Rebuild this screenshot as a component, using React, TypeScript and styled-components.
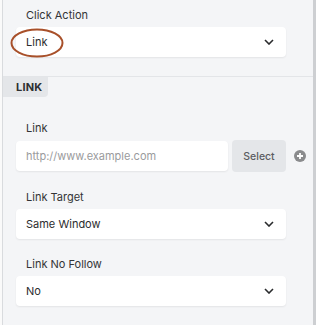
import React from "react";
import styled, { createGlobalStyle } from "styled-components";

const GlobalStyle = createGlobalStyle`
  html, body {
    margin: 0;
    padding: 0;
    background: #fafafa;
    font-family: Inter, "Noto Sans", sans-serif;
    -webkit-font-smoothing: antialiased;
  }
`;

const Page = styled.div`
  display: flex;
  height: 325px;
  padding-left: 2px;
`;

const Panel = styled.div`
  width: 310px;
  background: #f4f5f7;
  border-left: 1px solid #d9dbde;
  border-right: 3px solid #cdcfd2;
  display: flex;
  flex-direction: column;
`;

const Section = styled.div<{ $top?: number }>`
  display: flex;
  flex-direction: column;
  gap: 17px;
  padding: ${(p) => p.$top ?? 7}px 0 0 13px;
`;

const TopSection = styled(Section)`
  padding-bottom: 19px;
  border-bottom: 1px solid #e3e5e8;
`;

const Tab = styled.div`
  width: 45px;
  height: 20px;
  box-sizing: border-box;
  padding-left: 13px;
  display: flex;
  align-items: center;
  background: #e4e6e9;
  border-bottom-right-radius: 4px;
  font-size: 11px;
  font-weight: 700;
  color: #2e2f31;
  letter-spacing: 0.2px;
`;

const Field = styled.div`
  display: flex;
  flex-direction: column;
  gap: 4px;
`;

const Label = styled.div`
  height: 16px;
  line-height: 16px;
  padding-left: 10px;
  font-size: 11px;
  color: #333436;
`;

const Box = styled.div<{ $width?: number }>`
  position: relative;
  width: ${(p) => p.$width ?? 270}px;
  height: 30px;
  box-sizing: border-box;
  padding: 0 12px 0 10px;
  display: flex;
  align-items: center;
  justify-content: space-between;
  background: #fff;
  border-radius: 4px;
  box-shadow: 0 1px 2px rgba(0, 0, 0, 0.07);
  font-size: 11px;
  color: #2b2c2e;
`;

const Placeholder = styled.span`
  color: #9a9b9d;
`;

const Row = styled.div`
  display: flex;
  align-items: center;
  gap: 4px;
`;

const SelectButton = styled.div`
  width: 54px;
  height: 32px;
  display: flex;
  align-items: center;
  justify-content: center;
  background: #e4e6e9;
  border-radius: 4px;
  font-size: 10.5px;
  font-weight: 500;
  color: #5a5c60;
`;

const AddIcon = styled.svg`
  margin-left: 4px;
`;

const Circle = styled.svg`
  position: absolute;
  left: -6px;
  top: 1px;
`;

const Chevron = () => (
  <svg width="10" height="6" viewBox="0 0 10 6">
    <path d="M1 1 L5 5 L9 1" fill="none" stroke="#2a2b2d" strokeWidth="1.6" />
  </svg>
);

const Dropdown: React.FC<{ value: string; children?: React.ReactNode }> = ({
  value,
  children,
}) => (
  <Box>
    <span>{value}</span>
    <Chevron />
    {children}
  </Box>
);

export default function App() {
  return (
    <>
      <GlobalStyle />
      <Page>
        <Panel>
          <TopSection>
            <Field>
              <Label>Click Action</Label>
              <Dropdown value="Link">
                <Circle width="54" height="32" viewBox="0 0 54 32">
                  <ellipse cx="27" cy="15" rx="25.5" ry="13.5" fill="none" stroke="#a8502a" strokeWidth="2" />
                </Circle>
              </Dropdown>
            </Field>
          </TopSection>
          <Tab>LINK</Tab>
          <Section $top={23}>
            <Field>
              <Label>Link</Label>
              <Row>
                <Box $width={212}>
                  <Placeholder>http://www.example.com</Placeholder>
                </Box>
                <SelectButton>Select</SelectButton>
                <AddIcon width="12" height="12" viewBox="0 0 12 12">
                  <circle cx="6" cy="6" r="6" fill="#8a8b8d" />
                  <path d="M6 3 V9 M3 6 H9" stroke="#fff" strokeWidth="1.8" />
                </AddIcon>
              </Row>
            </Field>
            <Field>
              <Label>Link Target</Label>
              <Dropdown value="Same Window" />
            </Field>
            <Field>
              <Label>Link No Follow</Label>
              <Dropdown value="No" />
            </Field>
          </Section>
        </Panel>
      </Page>
    </>
  );
}
